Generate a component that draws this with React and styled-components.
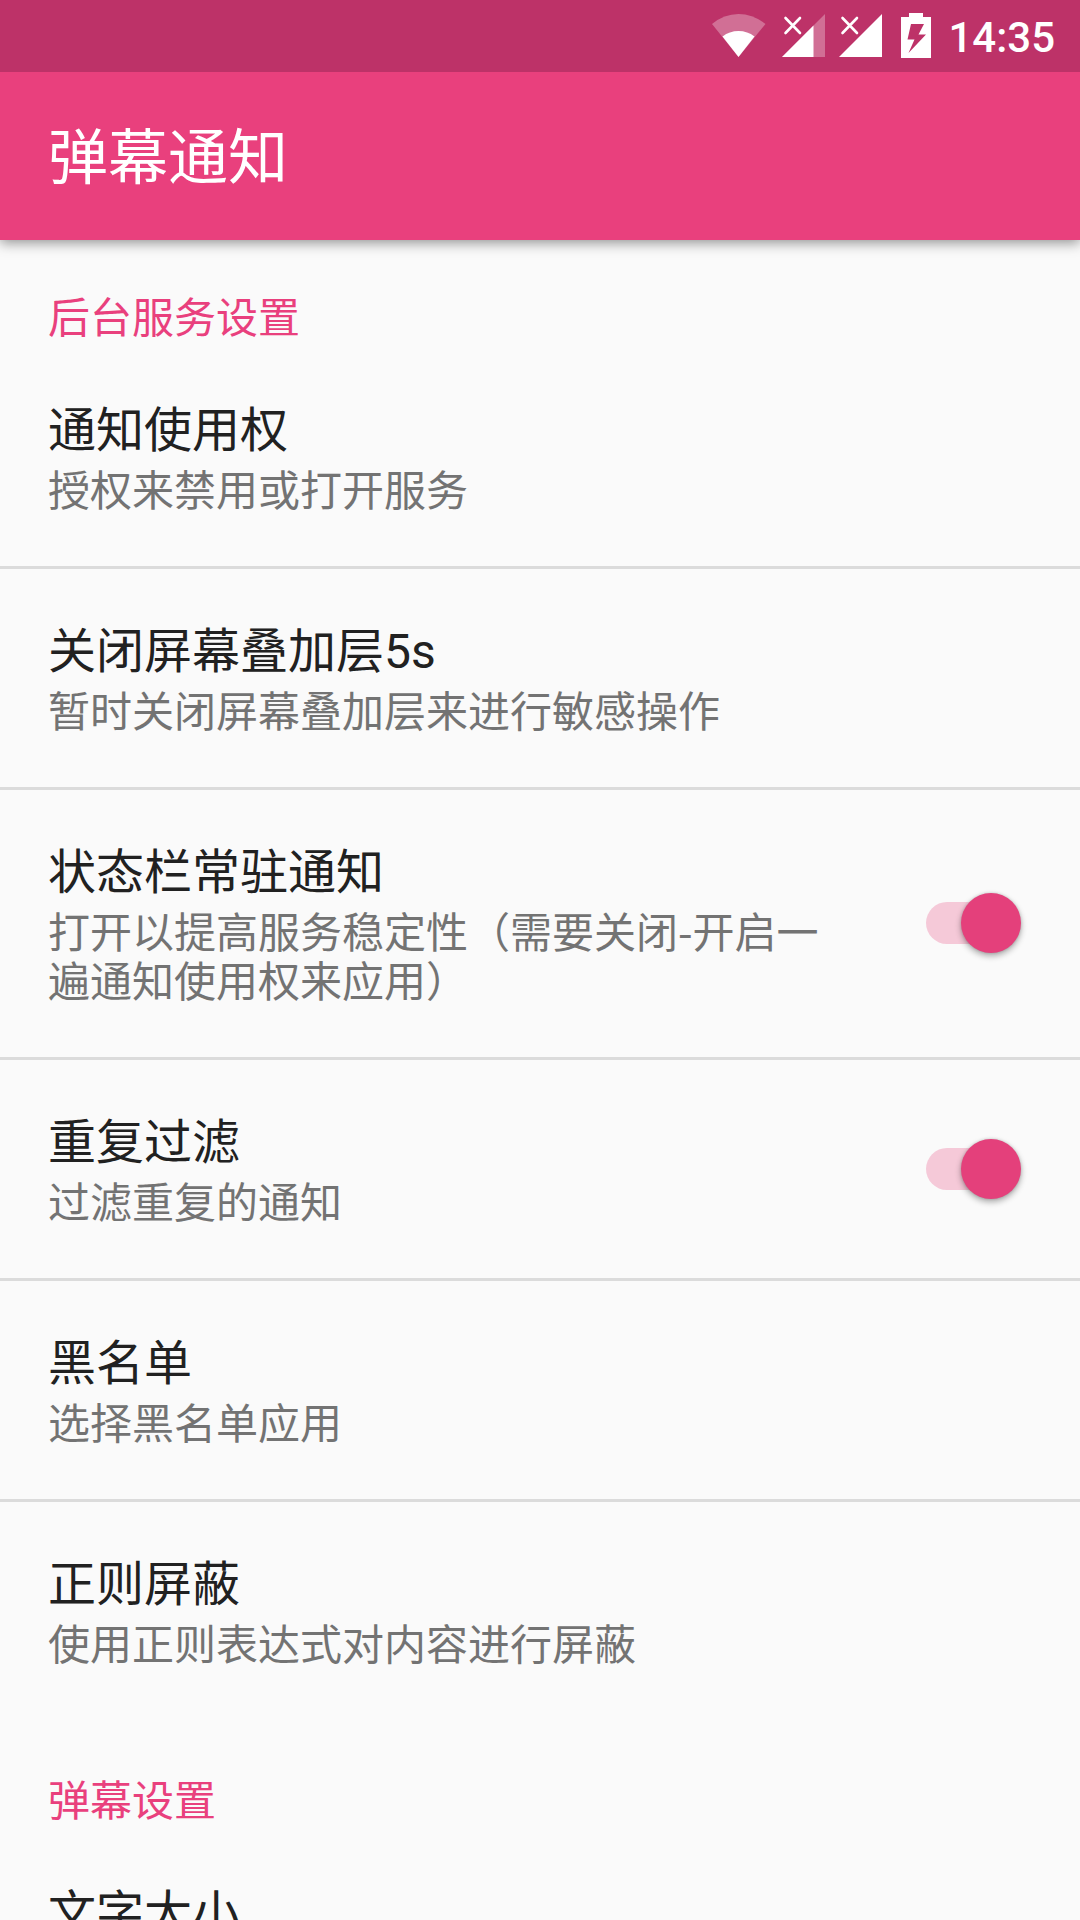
import React from "react";
import styled, { createGlobalStyle } from "styled-components";

const GlobalStyle = createGlobalStyle`
  body {
    margin: 0;
    background-color: #fafafa;
  }
`;

const Screen = styled.div`
  display: flex;
  flex-direction: column;
  width: 1080px;
  height: 1920px;
  overflow: hidden;
  background-color: #fafafa;
  font-family: Roboto, "Noto Sans CJK SC", sans-serif;
`;

const StatusBar = styled.div`
  position: relative;
  z-index: 1;
  display: flex;
  flex-shrink: 0;
  justify-content: flex-end;
  height: 72px;
  padding-right: 25px;
  background-color: #bd3268;
`;

const StatusIcon = styled.svg`
  flex-shrink: 0;
  height: 72px;
  margin-right: ${({ $gap }) => $gap}px;
  fill: #ffffff;
`;

const Clock = styled.div`
  color: #ffffff;
  font-size: 42px;
  font-weight: 500;
  line-height: 76px;
`;

const AppBar = styled.header`
  display: flex;
  flex-shrink: 0;
  align-items: center;
  box-sizing: border-box;
  height: 168px;
  padding: 5px 48px 0;
  background-color: #e9407d;
  box-shadow: 0 3px 12px rgba(0, 0, 0, 0.42);
`;

const AppTitle = styled.h1`
  margin: 0;
  color: #ffffff;
  font-size: 60px;
  font-weight: 400;
  line-height: 80px;
`;

const Category = styled.h2`
  margin: 0;
  padding: 49px 48px 0;
  color: #e9407d;
  font-size: 42px;
  font-weight: 400;
  line-height: 59px;
`;

const Row = styled.div`
  display: flex;
  flex-shrink: 0;
  align-items: center;
  justify-content: space-between;
  padding: 50px 48px 50px;
  border-bottom: 3px solid ${({ $last }) => ($last ? "transparent" : "#dbdbdb")};
`;

const RowText = styled.div`
  max-width: 782px;
`;

const RowTitle = styled.div`
  color: #212121;
  font-size: 48px;
  line-height: 66px;
`;

const Summary = styled.div`
  margin: -1px 0 4px;
  color: #737373;
  font-family: "Noto Sans CJK SC", sans-serif;
  font-size: 42px;
  line-height: 49px;
`;

const Track = styled.div`
  display: flex;
  align-items: center;
  justify-content: flex-end;
  width: 86px;
  height: 42px;
  margin: 0 20px 1px 0;
  border-radius: 21px;
  background-color: #f5c9d8;
`;

const Thumb = styled.div`
  flex-shrink: 0;
  width: 60px;
  height: 60px;
  margin-right: -9px;
  border-radius: 50%;
  background-color: #e4407b;
  box-shadow: 0 3px 6px rgba(0, 0, 0, 0.32), 0 0 3px rgba(0, 0, 0, 0.16);
`;

function Wifi() {
  return (
    <StatusIcon width="54" viewBox="0 0 54 72" $gap={16}>
      <path d="M0 24Q12 14 26.5 14T53.5 24L26.5 57Z" opacity="0.3" />
      <path d="M10.5 36.5Q17.5 31 26.5 31T42.5 36.5L26.5 57Z" />
    </StatusIcon>
  );
}

function Signal({ weak, gap }) {
  return (
    <StatusIcon width="43" viewBox="0 0 43 72" $gap={gap}>
      {weak && <path d="M0 57L43 14V57Z" opacity="0.3" />}
      <path d={weak ? "M0 57L31.5 25.5V57Z" : "M0 57L43 14V57Z"} />
      <path
        d="M3.5 18L18 33M18 18L3.5 33"
        stroke="#ffffff"
        strokeWidth="2.6"
        strokeLinecap="round"
      />
    </StatusIcon>
  );
}

function Battery() {
  return (
    <StatusIcon width="30" viewBox="0 0 30 72" $gap={17}>
      <path
        fillRule="evenodd"
        d="M8 13H22V17H30V58H0V17H8ZM10 24L6.5 39.5H13.5L7.5 53L25 34.5H17.5L23 24Z"
      />
    </StatusIcon>
  );
}

function Preference({ title, summary, checked, last }) {
  return (
    <Row $last={last}>
      <RowText>
        <RowTitle>{title}</RowTitle>
        <Summary>{summary}</Summary>
      </RowText>
      {checked && (
        <Track role="switch" aria-checked="true">
          <Thumb />
        </Track>
      )}
    </Row>
  );
}

const preferences = [
  { title: "通知使用权", summary: "授权来禁用或打开服务" },
  { title: "关闭屏幕叠加层5s", summary: "暂时关闭屏幕叠加层来进行敏感操作" },
  {
    title: "状态栏常驻通知",
    summary: "打开以提高服务稳定性（需要关闭-开启一遍通知使用权来应用）",
    checked: true,
  },
  { title: "重复过滤", summary: "过滤重复的通知", checked: true },
  { title: "黑名单", summary: "选择黑名单应用" },
  { title: "正则屏蔽", summary: "使用正则表达式对内容进行屏蔽" },
];

function App() {
  return (
    <>
      <GlobalStyle />
      <Screen lang="zh-CN">
        <StatusBar>
          <Wifi />
          <Signal weak gap={14} />
          <Signal gap={19} />
          <Battery />
          <Clock>14:35</Clock>
        </StatusBar>
        <AppBar>
          <AppTitle>弹幕通知</AppTitle>
        </AppBar>
        <Category>后台服务设置</Category>
        {preferences.map((item, index) => (
          <Preference
            key={item.title}
            last={index === preferences.length - 1}
            {...item}
          />
        ))}
        <Category>弹幕设置</Category>
        <Preference title="文字大小" last />
      </Screen>
    </>
  );
}

export default App;
